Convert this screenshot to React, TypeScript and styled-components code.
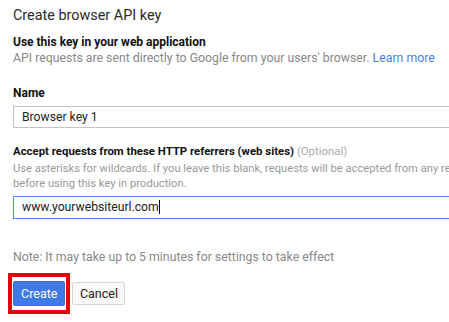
import styled, { createGlobalStyle } from "styled-components";

const GlobalStyle = createGlobalStyle`
  html, body {
    margin: 0;
    padding: 0;
    background: #fff;
    overflow: hidden;
  }
  body {
    font-family: Roboto, "Liberation Sans", Arial, sans-serif;
  }
`;

const STPage = styled.div`
  width: 560px;
  padding: 7px 0 0 13px;
  color: #222;
`;

const STTitle = styled.h1`
  margin: 0;
  font-size: 14.4px;
  font-weight: 400;
  line-height: 18px;
  color: #2a2a2a;
`;

const STSection = styled.div<{ $top: number }>`
  margin-top: ${(p) => p.$top}px;
`;

const STHeading = styled.div<{ $gap?: number }>`
  font-size: 12px;
  font-weight: 700;
  line-height: 16px;
  color: #111;
  margin-bottom: ${(p) => p.$gap ?? 0}px;
`;

const STLabel = styled.div`
  font-size: 11.4px;
  font-weight: 700;
  line-height: 15px;
  color: #111;
  white-space: nowrap;
`;

const STOptional = styled.span`
  font-weight: 400;
  color: #aaa;
`;

const STDesc = styled.div`
  font-size: 12.3px;
  line-height: 17px;
  color: #888;
  white-space: nowrap;
`;

const STHelp = styled.div`
  margin-top: 2px;
  margin-bottom: 4px;
  font-size: 11.2px;
  line-height: 15.3px;
  color: #999;
  white-space: nowrap;
`;

const STLink = styled.a`
  color: #4a7fe0;
  text-decoration: none;
`;

const STInput = styled.div<{ $focused?: boolean }>`
  box-sizing: border-box;
  width: 100%;
  height: ${(p) => (p.$focused ? 23 : 22)}px;
  border: 1px solid ${(p) => (p.$focused ? "#4d90fe" : "#c4c4c4")};
  padding: 0 8px;
  font-size: 12.2px;
  line-height: ${(p) => (p.$focused ? 21 : 20)}px;
  color: #222;
`;

const STCaret = styled.span`
  display: inline-block;
  width: 1px;
  height: 14px;
  background: #000;
  vertical-align: -3px;
`;

const STNote = styled.div`
  margin-top: 30px;
  font-size: 12.3px;
  line-height: 16px;
  color: #888;
`;

const STActions = styled.div`
  display: flex;
  align-items: center;
  gap: 2px;
  margin-top: 8px;
  margin-left: -5px;
`;

const STHighlight = styled.div`
  display: flex;
  padding: 4px 1px;
  border: 4px solid #e8000b;
`;

const STButton = styled.button<{ $primary?: boolean }>`
  box-sizing: border-box;
  height: ${(p) => (p.$primary ? 25 : 23)}px;
  padding: 0 ${(p) => (p.$primary ? 7 : 6.5)}px;
  border: 1px solid ${(p) => (p.$primary ? "#3b6fd6" : "#d6d6d6")};
  border-radius: 2px;
  background: ${(p) => (p.$primary ? "#3f7ae6" : "#f8f8f8")};
  color: ${(p) => (p.$primary ? "#fff" : "#222")};
  font-family: Roboto, "Liberation Sans", Arial, sans-serif;
  font-size: 12.5px;
  line-height: 21px;
  cursor: pointer;
`;

export default function App() {
  return (
    <>
      <GlobalStyle />
      <STPage>
        <STTitle>Create browser API key</STTitle>
        <STSection $top={9}>
          <STHeading>Use this key in your web application</STHeading>
          <STDesc>
            API requests are sent directly to Google from your users' browser.{" "}
            <STLink href="#">Learn more</STLink>
          </STDesc>
        </STSection>
        <STSection $top={18}>
          <STHeading $gap={5}>Name</STHeading>
          <STInput>Browser key 1</STInput>
        </STSection>
        <STSection $top={16}>
          <STLabel>
            Accept requests from these HTTP referrers (web sites){" "}
            <STOptional>(Optional)</STOptional>
          </STLabel>
          <STHelp>
            Use asterisks for wildcards. If you leave this blank, requests will be accepted from any referrer.
            <br />
            before using this key in production.
          </STHelp>
          <STInput $focused>
            www.yourwebsiteurl.com
            <STCaret />
          </STInput>
        </STSection>
        <STNote>Note: It may take up to 5 minutes for settings to take effect</STNote>
        <STActions>
          <STHighlight>
            <STButton $primary>Create</STButton>
          </STHighlight>
          <STButton>Cancel</STButton>
        </STActions>
      </STPage>
    </>
  );
}
